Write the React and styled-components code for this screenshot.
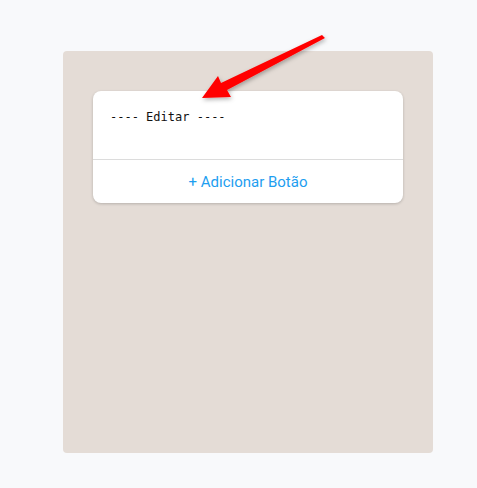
import React from 'react'
import styled, { createGlobalStyle } from 'styled-components'

const GlobalStyle = createGlobalStyle`
  html, body {
    margin: 0;
    padding: 0;
    background: #f8f9fb;
  }
  body {
    font-family: Roboto, "Liberation Sans", sans-serif;
  }
`

const Page = styled.div`
  position: relative;
  width: 477px;
  height: 488px;
  padding: 51px 0 0 63px;
  box-sizing: border-box;
`

const Panel = styled.div`
  width: 370px;
  height: 402px;
  box-sizing: border-box;
  padding: 40px 30px 0;
  background: #e4dcd6;
  border-radius: 4px;
`

const Card = styled.div`
  display: flex;
  flex-direction: column;
  background: #fff;
  border-radius: 8px;
  box-shadow: 0 1px 3px rgba(0, 0, 0, 0.2);
  overflow: hidden;
`

const Body = styled.div`
  height: 69px;
  box-sizing: border-box;
  padding: 19px 17px 0;
  border-bottom: 1px solid #dcdcdc;
  font-family: "DejaVu Sans Mono", "Liberation Mono", monospace;
  font-size: 12px;
  color: #111;
`

const AddButton = styled.button`
  height: 43px;
  border: 0;
  background: transparent;
  font-family: Roboto, "Liberation Sans", sans-serif;
  font-size: 15px;
  color: #1d9ef0;
  cursor: pointer;
`

const Arrow = styled.svg`
  position: absolute;
  left: 0;
  top: 0;
  pointer-events: none;
`

export default function App() {
  return (
    <>
      <GlobalStyle />
      <Page>
        <Panel>
          <Card>
            <Body>---- Editar ----</Body>
            <AddButton>+ Adicionar Botão</AddButton>
          </Card>
        </Panel>
        <Arrow width="477" height="488" viewBox="0 0 477 488">
          <defs>
            <filter id="sh" x="-20%" y="-20%" width="140%" height="140%">
              <feDropShadow dx="1" dy="2" stdDeviation="2" floodColor="#000" floodOpacity="0.3" />
            </filter>
          </defs>
          <polygon
            points="202,98 231,97 227,90 325,38 322,35 221,83 218,76"
            fill="#ff0000"
            filter="url(#sh)"
          />
        </Arrow>
      </Page>
    </>
  )
}
